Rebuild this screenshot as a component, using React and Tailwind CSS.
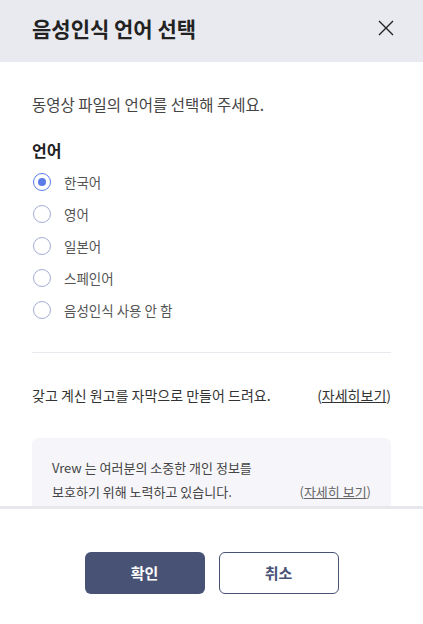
import React from "react";

const langs = ["한국어", "영어", "일본어", "스페인어", "음성인식 사용 안 함"];

function Radio({ checked, label }) {
  return (
    <div className="flex items-center h-8">
      <span
        className={
          "flex items-center justify-center w-[18px] h-[18px] ml-px rounded-full border bg-white " +
          (checked ? "border-[#5b7be8]" : "border-[#a3acd3]")
        }
      >
        {checked && <span className="w-2 h-2 rounded-full bg-[#5b7be8]" />}
      </span>
      <span className="ml-[13px] text-[13.5px] text-[#555]">{label}</span>
    </div>
  );
}

export default function App() {
  return (
    <div className="w-[423px] h-[624px] bg-white flex flex-col font-['Noto_Sans_CJK_KR','Noto_Sans',sans-serif] overflow-hidden">
      <div className="h-[62px] shrink-0 bg-[#e9eaf0] flex items-center justify-between pl-8 pr-[29px]">
        <h1 className="text-[21px] font-bold text-[#222] leading-none -mt-[6px]">음성인식 언어 선택</h1>
        <svg width="16" height="16" viewBox="0 0 16 16" className="-mt-[6px]">
          <path d="M1 1 L15 15 M15 1 L1 15" stroke="#222" strokeWidth="1.4" fill="none" />
        </svg>
      </div>
      <div className="flex-1 overflow-hidden px-8">
        <p className="mt-[32px] text-[15.5px] leading-5 text-[#444]">동영상 파일의 언어를 선택해 주세요.</p>
        <div className="mt-[26px] text-[16px] font-bold text-[#222] leading-5">언어</div>
        <div className="mt-[6px] flex flex-col">
          {langs.map((l, i) => (
            <Radio key={l} checked={i === 0} label={l} />
          ))}
        </div>
        <div className="mt-[26px] border-t border-[#e8e9ef]" />
        <div className="mt-[32px] flex justify-between text-[14px] text-[#333] leading-5">
          <span>갖고 계신 원고를 자막으로 만들어 드려요.</span>
          <span>
            (<span className="underline">자세히보기</span>)
          </span>
        </div>
        <div className="mt-[33px] rounded-md bg-[#f6f6fa] px-5 pt-[18px] pb-5 text-[13px] text-[#444] leading-6">
          <div>Vrew 는 여러분의 소중한 개인 정보를</div>
          <div className="flex justify-between">
            <span>보호하기 위해 노력하고 있습니다.</span>
            <span className="text-[#666]">
              (<span className="underline">자세히 보기</span>)
            </span>
          </div>
        </div>
      </div>
      <div className="h-[118px] shrink-0 border-t-[3px] border-[#e8e8ec] flex justify-center pt-[43px] gap-[14px]">
        <button className="w-[120px] h-[42px] rounded-md bg-[#475275] text-white text-[15px] font-bold">확인</button>
        <button className="w-[120px] h-[42px] rounded-md border border-[#475275] bg-white text-[#475275] text-[15px] font-bold">취소</button>
      </div>
    </div>
  );
}
